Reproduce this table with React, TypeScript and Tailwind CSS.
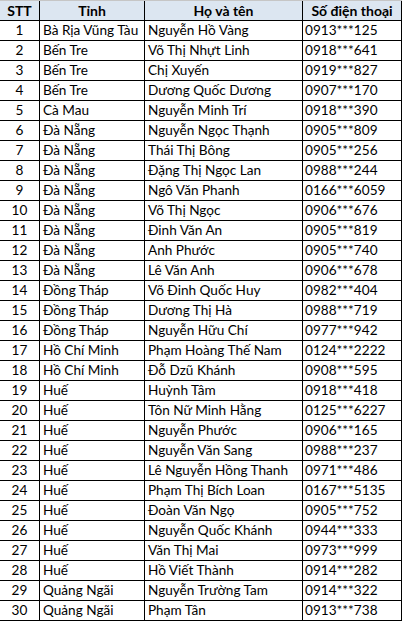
import React from "react";

const rows: [number, string, string, string][] = [
  [1, "Bà Rịa Vũng Tàu", "Nguyễn Hồ Vàng", "0913***125"],
  [2, "Bến Tre", "Võ Thị Nhựt Linh", "0918***641"],
  [3, "Bến Tre", "Chị Xuyến", "0919***827"],
  [4, "Bến Tre", "Dương Quốc Dương", "0907***170"],
  [5, "Cà Mau", "Nguyễn Minh Trí", "0918***390"],
  [6, "Đà Nẵng", "Nguyễn Ngọc Thạnh", "0905***809"],
  [7, "Đà Nẵng", "Thái Thị Bông", "0905***256"],
  [8, "Đà Nẵng", "Đặng Thị Ngọc Lan", "0988***244"],
  [9, "Đà Nẵng", "Ngô Văn Phanh", "0166***6059"],
  [10, "Đà Nẵng", "Võ Thị Ngọc", "0906***676"],
  [11, "Đà Nẵng", "Đinh Văn An", "0905***819"],
  [12, "Đà Nẵng", "Anh Phước", "0905***740"],
  [13, "Đà Nẵng", "Lê Văn Anh", "0906***678"],
  [14, "Đồng Tháp", "Võ Đinh Quốc Huy", "0982***404"],
  [15, "Đồng Tháp", "Dương Thị Hà", "0988***719"],
  [16, "Đồng Tháp", "Nguyễn Hữu Chí", "0977***942"],
  [17, "Hồ Chí Minh", "Phạm Hoàng Thế Nam", "0124***2222"],
  [18, "Hồ Chí Minh", "Đỗ Dzũ Khánh", "0908***595"],
  [19, "Huế", "Huỳnh Tâm", "0918***418"],
  [20, "Huế", "Tôn Nữ Minh Hằng", "0125***6227"],
  [21, "Huế", "Nguyễn Phước", "0906***165"],
  [22, "Huế", "Nguyễn Văn Sang", "0988***237"],
  [23, "Huế", "Lê Nguyễn Hồng Thanh", "0971***486"],
  [24, "Huế", "Phạm Thị Bích Loan", "0167***5135"],
  [25, "Huế", "Đoàn Văn Ngọ", "0905***752"],
  [26, "Huế", "Nguyễn Quốc Khánh", "0944***333"],
  [27, "Huế", "Văn Thị Mai", "0973***999"],
  [28, "Huế", "Hồ Viết Thành", "0914***282"],
  [29, "Quảng Ngãi", "Nguyễn Trường Tam", "0914***322"],
  [30, "Quảng Ngãi", "Phạm Tân", "0913***738"],
];

const grid = "grid grid-cols-[40px_105px_158px_99px]";
const cell = "border-r border-black flex items-end pb-[2px] overflow-hidden whitespace-nowrap";

export default function App() {
  return (
    <div
      className="w-[402px] h-[622px] bg-white text-black text-[13.6px] leading-none"
      style={{ fontFamily: "Lato, 'Noto Sans', sans-serif" }}
    >
      <div className={`${grid} h-[21px] bg-[#dce6f1] border-t border-[#c6c6c6] border-b border-b-black font-bold text-[14px]`}>
        <div className={`${cell} justify-center`}>STT</div>
        <div className={`${cell} justify-center`}>Tỉnh</div>
        <div className={`${cell} justify-center`}>Họ và tên</div>
        <div className={`${cell} justify-center`}>Số điện thoại</div>
      </div>
      {rows.map(([stt, tinh, ten, sdt]) => (
        <div key={stt} className={`${grid} h-[20px] border-b border-black`}>
          <div className={`${cell} justify-center`}>{stt}</div>
          <div className={`${cell} pl-[3px]`}>{tinh}</div>
          <div className={`${cell} pl-[3px]`}>{ten}</div>
          <div className={`${cell} pl-[2px]`}>{sdt}</div>
        </div>
      ))}
    </div>
  );
}
